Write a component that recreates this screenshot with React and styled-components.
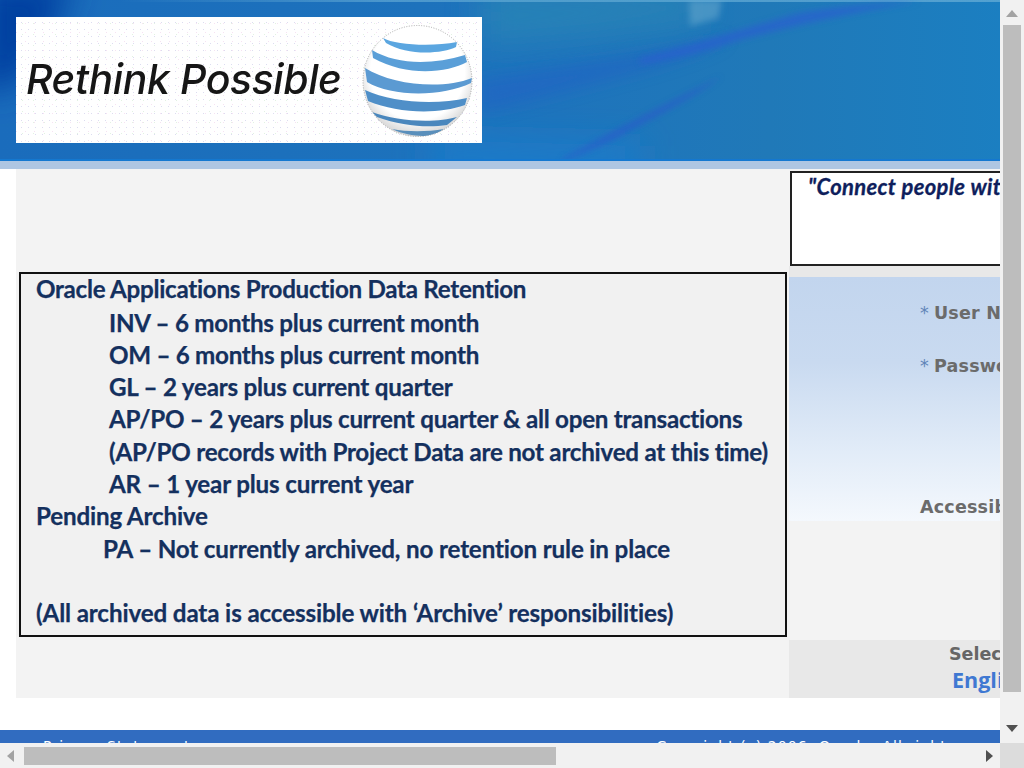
import React from "react";
import styled, { createGlobalStyle } from "styled-components";

const Global = createGlobalStyle`
  html, body { margin: 0; padding: 0; width: 1024px; height: 768px; overflow: hidden; background: #fff; }
`;

const Screen = styled.div`
  width: 1024px; height: 768px; display: grid;
  grid-template-columns: 1000px 24px; grid-template-rows: 743px 25px; overflow: hidden;
`;
const Viewport = styled.div`overflow: hidden; width: 1000px; height: 743px; background: #fff;`;
const Sheet = styled.div`width: 1400px; display: flex; flex-direction: column;`;

const Header = styled.header`
  position: relative; height: 161px; box-sizing: border-box; padding: 17px 0 0 16px; overflow: hidden;
  background: linear-gradient(90deg, #1a6cbc 0%, #1e74bc 40%, #2079b8 55%, #1a80c3 75%, #1a80c3 100%);
`;
const HeaderArt = styled.svg`position: absolute; left: 0; top: 0; width: 1000px; height: 161px;`;
const Banner = styled.div`
  position: relative; width: 466px; height: 126px; box-sizing: border-box; background-color: #fff;
  display: flex; align-items: center; padding-left: 10px;
  background-image: radial-gradient(circle, #dcdcf0 0.7px, transparent 1px), radial-gradient(circle, #f6e2f2 0.7px, transparent 1px), radial-gradient(circle, #e2f2e2 0.7px, transparent 1px);
  background-size: 7px 7px, 9px 9px, 11px 11px; background-position: 2px 16px, 5px 20px, 1px 12px;
`;
const Slogan = styled.span`
  font: italic 500 41px/1 "Inter", "Liberation Sans", sans-serif; letter-spacing: -0.42px; color: #161616;
  margin-top: -1px; filter: blur(0.4px); white-space: nowrap;
`;
const Globe = styled.svg`position: absolute; left: 346px; top: 8px; width: 111px; height: 112px;`;
const Band = styled.div`height: 8px; background: #aec6e2;`;

const Body = styled.div`display: grid; grid-template-columns: 773px 611px; margin-left: 16px; height: 529px;`;
const LeftCol = styled.div`background: #f3f3f3; padding: 103px 0 0 3px; box-sizing: border-box;`;
const Notice = styled.div`
  width: 768px; height: 365px; box-sizing: border-box; border: 2px solid #111; background: #f1f1f1;
  padding: 0 0 0 15px; font: 700 24.2px/32.3px "Lato", "Open Sans", sans-serif; color: #14305e;
  -webkit-text-stroke: 0.25px #14305e;
`;
const Line = styled.div`
  height: ${p => p.$first ? 33.5 : 32.3}px; margin-top: ${p => p.$first ? -1 : 0}px; padding-left: ${p => p.$indent || 0}px;
  white-space: nowrap; letter-spacing: ${p => p.$track}px;
`;
const RightCol = styled.div`display: flex; flex-direction: column; background: #f3f3f3;`;
const Quote = styled.div`
  margin: 2px 0 0 1px; height: 95px; box-sizing: border-box; border: 2px solid #222; background: #fff;
  padding: 1px 0 0 16px; font: italic 700 22px/26px "Lato", sans-serif; color: #0e1e5c; white-space: nowrap; letter-spacing: 0.35px;
  -webkit-text-stroke: 0.3px #0e1e5c;
`;
const Gap = styled.div`height: 11px; background: #e8e8e8;`;
const LoginPanel = styled.div`
  height: 244px; box-sizing: border-box; padding: 25px 0 0 131px;
  background: linear-gradient(180deg, #c2d5ee 0%, #c9daf0 35%, #e2ecf8 72%, #f4f8fd 100%);
  display: flex; flex-direction: column; align-items: flex-start;
`;
const FieldLabel = styled.div`
  font: 700 17.5px/22px "DejaVu Sans", sans-serif; color: #6b6b6b; white-space: nowrap;
  margin-bottom: ${p => p.$gap || 0}px; letter-spacing: 0.2px;
`;
const Star = styled.span`color: #5f84b8; font-weight: 400; margin-right: 5px;`;
const Spacer = styled.div`height: 119px;`;
const Filler = styled.div`flex: 1;`;
const LangBox = styled.div`
  height: 58px; background: #e8e8e8; padding: 2px 0 0 160px; box-sizing: border-box;
`;
const LangTitle = styled.div`font: 700 17.5px/24px "DejaVu Sans", sans-serif; color: #666; white-space: nowrap;`;
const LangLink = styled.a`
  display: block; margin-left: 3px; font: 700 21.5px/28px "Open Sans", sans-serif;
  color: #3f78d2; white-space: nowrap;
`;

const Footer = styled.footer`
  margin-top: 32px; height: 60px; background: #316cc0; display: flex; color: #fff;
  font: 400 14px/16px "DejaVu Sans", sans-serif; padding: 8px 0 0 43px; box-sizing: border-box; letter-spacing: 1.1px;
`;
const FooterRight = styled.span`margin-left: 466px; white-space: nowrap;`;

const VBar = styled.div`
  background: #f1f1f1; display: flex; flex-direction: column; align-items: center; box-sizing: border-box; padding-top: 10px;
`;
const VThumb = styled.div`width: 18px; height: 667px; background: #bdbdbd; margin: 8px 0 33px;`;
const HBar = styled.div`
  background: #f1f1f1; display: flex; align-items: center; box-sizing: border-box; padding: 0 7px 0 7px;
`;
const HThumb = styled.div`width: 532px; height: 18px; background: #bdbdbd; margin: 0 auto 0 10px;`;
const Corner = styled.div`background: #dcdcdc;`;
const Arrow = styled.svg`width: ${p => p.$w}px; height: ${p => p.$h}px; flex: none; display: block;`;

const Blur = ({ id, d }) => (
  <filter id={id} x="-50%" y="-100%" width="200%" height="300%" filterUnits="objectBoundingBox">
    <feGaussianBlur stdDeviation={d} />
  </filter>
);

const Swoosh = () => (
  <HeaderArt viewBox="0 0 1000 161" preserveAspectRatio="none">
    <defs>
      <Blur id="b1" d="8" />
      <Blur id="b2" d="3" />
      <Blur id="b3" d="16" />
      <linearGradient id="edge" x1="0" x2="1">
        <stop offset="0" stopColor="#6ab0d8" stopOpacity="0" />
        <stop offset="0.3" stopColor="#6ab0d8" stopOpacity="0.6" />
        <stop offset="1" stopColor="#6ab0d8" stopOpacity="0.7" />
      </linearGradient>
    </defs>
    <path d="M-20 -20H75L45 45 8 90H-20Z" fill="#0640a0" filter="url(#b3)" />
    <path d="M480 -10H700V22L600 34 480 44Z" fill="#2a86b6" filter="url(#b3)" opacity=".8" />
    <path d="M430 140L640 145V175H430Z" fill="#1c7cca" filter="url(#b3)" />
    <path d="M689 0H722L718 18 690 26Z" fill="#62a6cc" filter="url(#b2)" opacity=".6" />
    <rect x="120" y="0" width="880" height="2" fill="url(#edge)" />
    <path d="M480 80C570 66 660 52 730 38 700 56 640 72 570 90 540 98 510 106 480 112Z" fill="#2460c6" filter="url(#b1)" opacity=".55" />
    <path d="M640 58C690 46 750 26 800 13 850 5 890 3 920 2 860 10 790 27 740 40 710 50 680 58 640 64Z" fill="#2a5ed0" filter="url(#b2)" opacity=".7" />
    <path d="M560 161C610 132 660 108 722 76 690 100 640 124 612 140 590 150 575 156 566 161Z" fill="#2c58cc" filter="url(#b2)" opacity=".7" />
    <path d="M0 159H1000V161H0Z" fill="#1478d0" />
  </HeaderArt>
);

const AttGlobe = () => (
  <Globe viewBox="0 0 111 112">
    <defs>
      <clipPath id="ball"><ellipse cx="55.5" cy="56" rx="54.5" ry="55.5" /></clipPath>
      <radialGradient id="shade" cx="0.5" cy="0.42" r="0.6">
        <stop offset="0.72" stopColor="#fff" />
        <stop offset="1" stopColor="#cfcfcf" />
      </radialGradient>
    </defs>
    <ellipse cx="55.5" cy="56" rx="54.5" ry="55.5" fill="url(#shade)" stroke="#a9a9a9" strokeWidth="1" strokeDasharray="1 1.5" />
    <g clipPath="url(#ball)">
      <path d="M21 13C33 20 70 22 95 17L94 22C80 29 45 31 24 18Z" fill="#5ba6e0" />
      <path d="M10 25C35 40 70 40 103 30L105 37C85 48 45 52 11 33Z" fill="#5a9fd8" />
      <path d="M3 43C30 60 80 65 110 53L109 58C80 72 30 72 5 57Z" fill="#5b9ad2" />
      <path d="M3 65C30 78 75 80 105 73L103 80C75 90 35 88 6 76Z" fill="#4f8fc8" />
      <path d="M10 87C35 97 75 98 95 92L85 100C65 103 40 101 15 92Z" fill="#4a87bd" />
      <path d="M30 104C45 107 65 107 82 104L72 110C60 112 45 111 30 104Z" fill="#5a8fbb" />
    </g>
  </Globe>
);

const lines = [
  { t: "Oracle Applications Production Data Retention", first: true, s: -0.29 },
  { t: "INV – 6 months plus current month", i: 73, s: -0.26 },
  { t: "OM – 6 months plus current month", i: 73, s: -0.29 },
  { t: "GL – 2 years plus current quarter", i: 73, s: -0.23 },
  { t: "AP/PO – 2 years plus current quarter & all open transactions", i: 73, s: -0.26 },
  { t: "(AP/PO records with Project Data are not archived at this time)", i: 73, s: -0.25 },
  { t: "AR – 1 year plus current year", i: 73, s: -0.18 },
  { t: "Pending Archive", s: -0.18 },
  { t: "PA – Not currently archived, no retention rule in place", i: 67, s: -0.16 },
  { t: "\u00a0", s: 0 },
  { t: "(All archived data is accessible with ‘Archive’ responsibilities)", s: -0.13 },
];

export default function App() {
  return (
    <>
      <Global />
      <Screen>
        <Viewport>
          <Sheet>
            <Header>
              <Swoosh />
              <Banner>
                <Slogan>Rethink Possible</Slogan>
                <AttGlobe />
              </Banner>
            </Header>
            <Band />
            <Body>
              <LeftCol>
                <Notice>
                  {lines.map((l, n) => (
                    <Line key={n} $first={l.first} $indent={l.i} $track={l.s}>{l.t}</Line>
                  ))}
                </Notice>
              </LeftCol>
              <RightCol>
                <Quote>"Connect people with</Quote>
                <Gap />
                <LoginPanel>
                  <FieldLabel $gap={31}><Star>*</Star>User Name</FieldLabel>
                  <FieldLabel><Star>*</Star>Password</FieldLabel>
                  <Spacer />
                  <FieldLabel>Accessibility</FieldLabel>
                </LoginPanel>
                <Filler />
                <LangBox>
                  <LangTitle>Select a Language</LangTitle>
                  <LangLink>English</LangLink>
                </LangBox>
              </RightCol>
            </Body>
            <Footer>
              <span>Privacy Statement</span>
              <FooterRight>Copyright (c) 2006, Oracle. All rights reserved.</FooterRight>
            </Footer>
          </Sheet>
        </Viewport>
        <VBar>
          <Arrow $w={12} $h={7} viewBox="0 0 12 7"><path d="M6 0L12 7H0Z" fill="#a3a3a3" /></Arrow>
          <VThumb />
          <Arrow $w={12} $h={7} viewBox="0 0 12 7"><path d="M6 7L0 0H12Z" fill="#505050" /></Arrow>
        </VBar>
        <HBar>
          <Arrow $w={7} $h={12} viewBox="0 0 7 12"><path d="M0 6L7 0V12Z" fill="#a3a3a3" /></Arrow>
          <HThumb />
          <Arrow $w={7} $h={12} viewBox="0 0 7 12"><path d="M7 6L0 0V12Z" fill="#505050" /></Arrow>
        </HBar>
        <Corner />
      </Screen>
    </>
  );
}
